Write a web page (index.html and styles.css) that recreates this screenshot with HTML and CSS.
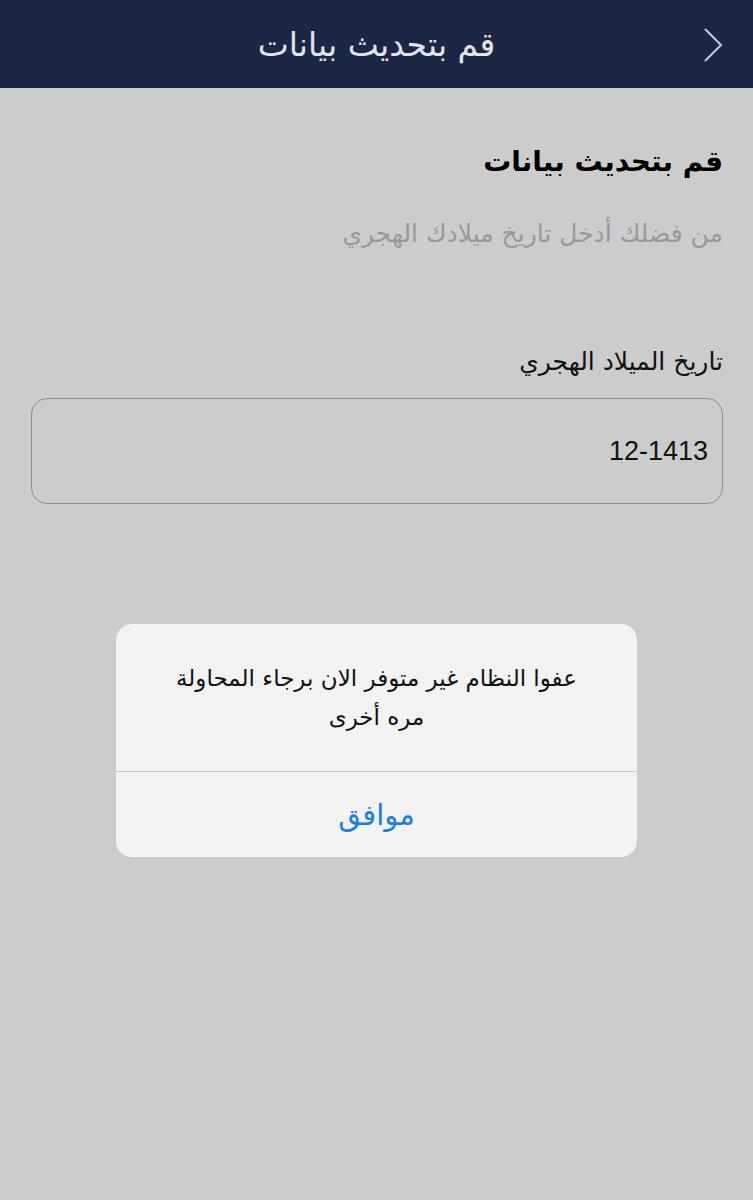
FILE: index.html
```html
<!DOCTYPE html>
<html lang="ar" dir="rtl">
<head>
<meta charset="utf-8">
<link rel="stylesheet" href="styles.css">
</head>
<body>
<div class="page">
  <header class="topbar">
    <span class="back">
      <svg width="20" height="34" viewBox="0 0 20 34"><path d="M2 1 L18 17 L2 33" fill="none" stroke="#c9ccd6" stroke-width="2"/></svg>
    </span>
    <h1 class="topbar-title">قم بتحديث بيانات</h1>
  </header>
  <main class="content">
    <h2 class="heading">قم بتحديث بيانات</h2>
    <p class="sub">من فضلك أدخل تاريخ ميلادك الهجري</p>
    <label class="label">تاريخ الميلاد الهجري</label>
    <div class="field">12-1413</div>
  </main>
  <div class="alert">
    <div class="alert-msg">عفوا النظام غير متوفر الان برجاء المحاولة<br>مره أخرى</div>
    <div class="alert-btn">موافق</div>
  </div>
</div>
</body>
</html>
```
FILE: styles.css
```css
* { box-sizing: border-box; margin: 0; padding: 0; }
html, body { width: 753px; height: 1200px; }
body {
  background: #cccccc;
  font-family: "DejaVu Sans", "Noto Sans", sans-serif;
  overflow: hidden;
}
.page { position: relative; width: 753px; height: 1200px; }
.topbar {
  height: 88px;
  background: #1c2645;
  display: flex;
  align-items: center;
  justify-content: center;
  position: relative;
}
.topbar-title {
  color: #e4e4e8;
  font-size: 33px;
  font-weight: normal;
}
.back {
  position: absolute;
  right: 30px;
  top: 28px;
  display: flex;
}
.content {
  padding: 54px 30px 0 31px;
  display: flex;
  flex-direction: column;
}
.heading {
  font-size: 28px;
  font-weight: bold;
  color: #000;
  line-height: 40px;
}
.sub {
  margin-top: 37px;
  font-size: 25px;
  color: #999999;
  line-height: 30px;
}
.label {
  margin-top: 97px;
  font-size: 25px;
  color: #111;
  line-height: 32px;
}
.field {
  margin-top: 20px;
  height: 106px;
  border: 1.5px solid #8c8c8c;
  border-radius: 16px;
  display: flex;
  align-items: center;
  padding: 0 14px;
  font-family: "Liberation Sans", sans-serif;
  font-size: 27px;
  color: #111;
  direction: ltr;
  justify-content: flex-end;
}
.alert {
  position: absolute;
  left: 116px;
  top: 624px;
  width: 521px;
  height: 233px;
  background: #f2f2f2;
  border-radius: 16px;
  display: flex;
  flex-direction: column;
  overflow: hidden;
}
.alert-msg {
  height: 148px;
  border-bottom: 1px solid #c8c8c8;
  text-align: center;
  font-size: 23px;
  line-height: 39px;
  color: #111;
  padding-top: 35px;
}
.alert-btn {
  flex: 1;
  display: flex;
  align-items: center;
  justify-content: center;
  color: #1a7fe2;
  font-size: 29px;
}
```
